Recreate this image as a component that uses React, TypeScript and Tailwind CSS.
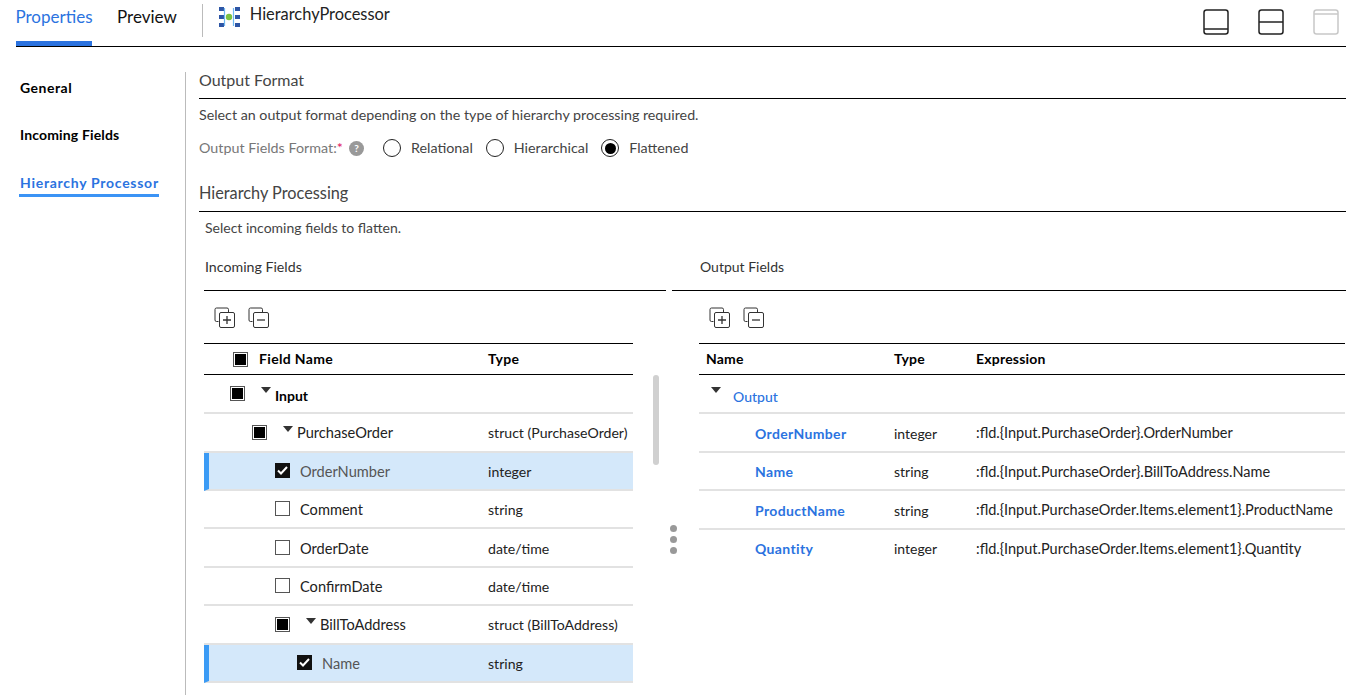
import React from "react";

const F = "font-['Lato','Liberation_Sans',sans-serif]";

function Caret() {
  return (
    <svg width="10" height="6" viewBox="0 0 10 6" className="shrink-0">
      <path d="M0 0H10L5 6Z" fill="#333" />
    </svg>
  );
}

function Check({ state }: { state: "none" | "checked" | "partial" }) {
  if (state === "checked")
    return (
      <span className="flex size-[15px] shrink-0 items-center justify-center bg-[#111]">
        <svg width="11" height="9" viewBox="0 0 11 9">
          <path d="M1 4.5L4 7.5L10 1" fill="none" stroke="#fff" strokeWidth="2" />
        </svg>
      </span>
    );
  return (
    <span className="flex size-[15px] shrink-0 items-center justify-center border border-[#555] bg-white">
      {state === "partial" && <span className="size-[11px] bg-black" />}
    </span>
  );
}

function Radio({ on, label }: { on?: boolean; label: string }) {
  return (
    <span className="flex items-center gap-[10px]">
      <span className="flex size-[18px] items-center justify-center rounded-full border border-[#222]">
        {on && <span className="size-[11px] rounded-full bg-black" />}
      </span>
      <span className="text-[#444]">{label}</span>
    </span>
  );
}

function Expand({ minus }: { minus?: boolean }) {
  return (
    <svg width="22" height="21" viewBox="0 0 22 21" fill="none" stroke="#333" strokeWidth="1">
      <path d="M4.5 14.5H2.5A1.5 1.5 0 0 1 1 13V2.5A1.5 1.5 0 0 1 2.5 1H13A1.5 1.5 0 0 1 14.5 2.5V5" />
      <rect x="5.5" y="5.5" width="15" height="15" rx="1.5" />
      <path d={minus ? "M9 13H17" : "M9 13H17M13 9V17"} strokeWidth="1.3" />
    </svg>
  );
}

function Pane({ line }: { line: "bottom" | "mid" | "top" }) {
  const y = line === "bottom" ? 20 : line === "mid" ? 13 : 5;
  return (
    <svg
      width="26"
      height="26"
      viewBox="0 0 26 26"
      fill="none"
      stroke={line === "top" ? "#c8c8c8" : "#222"}
      strokeWidth="1.5"
    >
      <rect x="1" y="1" width="24" height="24" rx="2.5" />
      <path d={`M1 ${y}H25`} />
    </svg>
  );
}

type Row = {
  name: string;
  type: string;
  indent: number;
  check: "none" | "checked" | "partial";
  caret?: boolean;
  bold?: boolean;
  selected?: boolean;
  h: string;
};

const rows: Row[] = [
  { name: "Input", type: "", indent: 26, check: "partial", caret: true, bold: true, h: "h-[39px]" },
  { name: "PurchaseOrder", type: "struct (PurchaseOrder)", indent: 48, check: "partial", caret: true, h: "h-[39px]" },
  { name: "OrderNumber", type: "integer", indent: 71, check: "checked", selected: true, h: "h-[38px]" },
  { name: "Comment", type: "string", indent: 71, check: "none", h: "h-[38px]" },
  { name: "OrderDate", type: "date/time", indent: 71, check: "none", h: "h-[39px]" },
  { name: "ConfirmDate", type: "date/time", indent: 71, check: "none", h: "h-[38px]" },
  { name: "BillToAddress", type: "struct (BillToAddress)", indent: 71, check: "partial", caret: true, h: "h-[39px]" },
  { name: "Name", type: "string", indent: 93, check: "checked", selected: true, h: "h-[38px]" },
];

const outs = [
  ["OrderNumber", "integer", ":fld.{Input.PurchaseOrder}.OrderNumber"],
  ["Name", "string", ":fld.{Input.PurchaseOrder}.BillToAddress.Name"],
  ["ProductName", "string", ":fld.{Input.PurchaseOrder.Items.element1}.ProductName"],
  ["Quantity", "integer", ":fld.{Input.PurchaseOrder.Items.element1}.Quantity"],
];

export default function App() {
  return (
    <div className={`${F} h-[695px] w-[1356px] overflow-hidden bg-white pl-4 pr-[10px] text-[14px] text-[#222]`}>
      <header className="flex h-[47px] items-stretch border-b border-black">
        <div className="flex h-[46px] w-[76px] justify-center border-b-[5px] border-[#2b73e0] pt-[4px] text-[17px] text-[#2b73e0]">
          Properties
        </div>
        <div className="ml-[25px] pt-[4px] text-[17px] text-[#111]">Preview</div>
        <div className="mb-[9px] ml-[25px] mt-[4px] w-px bg-[#bbb]" />
        <div className="ml-[16px] mt-[7px] h-[20px]">
          <svg width="21" height="20" viewBox="0 0 21 20" className="block">
            <g fill="#2d55a5">
              <rect x="0" y="0" width="5" height="4" />
              <rect x="0" y="8" width="5" height="4" />
              <rect x="0" y="16" width="5" height="4" />
              <rect x="16" y="0" width="5" height="4" />
              <rect x="16" y="8" width="5" height="4" />
              <rect x="16" y="16" width="5" height="4" />
            </g>
            <path d="M5.5 1V19M14.5 1V19" stroke="#6db8f2" strokeWidth="1.2" fill="none" />
            <circle cx="10" cy="10" r="3.2" fill="#7cc242" />
          </svg>
        </div>
        <div className="ml-[10px] pt-[2px] text-[16.4px] text-[#222]">HierarchyProcessor</div>
        <div className="ml-auto mr-[7px] mt-[9px] flex h-[26px] gap-[29px]">
          <Pane line="bottom" />
          <Pane line="mid" />
          <Pane line="top" />
        </div>
      </header>

      <div className="mt-[25px] flex h-[623px]">
        <nav className="flex w-[170px] shrink-0 flex-col items-start border-r border-[#bbb] pl-[3px] font-bold text-black">
          <div className="mt-[6px] h-[20px] pl-px leading-[20px] tracking-[0.5px]">General</div>
          <div className="mt-[27px] h-[20px] pl-px leading-[20px] tracking-[0.15px]">Incoming Fields</div>
          <div className="mt-[28px] border-b-[3px] border-[#3b93f5] pb-[1px] pl-px leading-[20px] tracking-[0.72px] text-[#2b73e0]">
            Hierarchy Processor
          </div>
        </nav>

        <main className="flex-1 pl-[13px]">
          <h2 className="h-[27px] border-b border-black text-[16px] leading-[15px] text-[#444]">Output Format</h2>
          <p className="mt-[6px] h-[20px] text-[14.25px] leading-[20px] text-[#444]">
            Select an output format depending on the type of hierarchy processing required.
          </p>
          <div className="mt-[13px] flex h-[20px] items-center text-[14.3px] leading-[20px]">
            <span className="w-[141px] whitespace-nowrap text-[#777]">
              Output Fields Format:<span className="text-[#e0115f]">*</span>
            </span>
            <span className="ml-[9px] flex size-[15px] items-center justify-center rounded-full bg-[#999] text-[10px] font-bold text-white">
              ?
            </span>
            <span className="ml-[19px] flex gap-[13px]">
              <Radio label="Relational" />
              <Radio label="Hierarchical" />
              <Radio on label="Flattened" />
            </span>
          </div>
          <h2 className="mt-[27px] h-[27px] border-b border-black text-[16.3px] leading-[15px] text-[#444]">
            Hierarchy Processing
          </h2>
          <p className="ml-[6px] mt-[6px] h-[20px] leading-[20px] text-[#444]">Select incoming fields to flatten.</p>

          <div className="ml-[5px] mt-[19px] flex">
            <section className="relative w-[462px] shrink-0">
              <div className="h-[34px] border-b border-black pl-px text-[14.2px] leading-[19px] text-[#333]">Incoming Fields</div>
              <div className="flex h-[52px] items-center gap-3 pl-[10px]">
                <Expand />
                <Expand minus />
              </div>
              <div className="w-[429px]">
                <div className="flex h-[32px] items-center border-y border-black pb-[2px] font-bold tracking-[0.35px] text-black">
                  <span className="ml-[29px] mr-[11px] mt-[2px]">
                    <Check state="partial" />
                  </span>
                  <span className="w-[229px]">Field Name</span>
                  <span>Type</span>
                </div>
                {rows.map((r) => (
                  <div
                    key={r.name}
                    className={`flex ${r.h} items-center border-b-2 border-[#e2e2e2] ${
                      r.selected ? "border-l-[5px] border-l-[#3b9bf5] bg-[#d4e8fa]" : ""
                    }`}
                  >
                    <span className={`flex items-center text-[14.6px] ${r.selected ? "w-[279px]" : "w-[284px]"}`}>
                      <span style={{ marginLeft: r.selected ? r.indent - 5 : r.indent }} className="flex items-center">
                        <Check state={r.check} />
                      </span>
                      {r.caret ? (
                        <span className={`ml-[16px] flex items-center gap-[4px] ${r.bold ? "font-bold text-black" : ""}`}>
                          <span className="-mt-[7px]">
                            <Caret />
                          </span>
                          <span className={r.bold ? "mt-[3px] text-[14px]" : ""}>{r.name}</span>
                        </span>
                      ) : (
                        <span className={`ml-[10px] pt-[2px] ${r.selected ? "text-[#555]" : ""}`}>{r.name}</span>
                      )}
                    </span>
                    <span className={`whitespace-nowrap text-[14.1px] ${r.caret ? "" : "pt-[2px]"}`}>{r.type}</span>
                  </div>
                ))}
              </div>
              <div className="absolute left-[449px] top-[118px] h-[90px] w-[6px] rounded-[3px] bg-[#d0d0d0]" />
            </section>

            <section className="relative ml-[6px] flex-1">
              <span className="absolute -left-[2px] top-[268px] flex flex-col gap-[4px]">
                <span className="size-[7px] rounded-full bg-[#999]" />
                <span className="size-[7px] rounded-full bg-[#999]" />
                <span className="size-[7px] rounded-full bg-[#999]" />
              </span>
              <div className="h-[34px] border-b border-black pl-[28px] leading-[19px] text-[#333]">Output Fields</div>
              <div className="flex h-[52px] items-center gap-3 pl-[37px]">
                <Expand />
                <Expand minus />
              </div>
              <div className="ml-[27px] mr-px">
                <div className="flex h-[32px] items-center border-y border-black pb-[2px] font-bold tracking-[0.2px] text-black">
                  <span className="ml-[7px] w-[188px]">Name</span>
                  <span className="w-[82px]">Type</span>
                  <span>Expression</span>
                </div>
                <div className="flex h-[39px] items-center border-b-2 border-[#e2e2e2] pl-[12px]">
                  <span className="-mt-[8px]">
                    <Caret />
                  </span>
                  <span className="ml-[12px] mt-[5px] font-medium text-[#2b73e0]">Output</span>
                </div>
                {outs.map((o, i) => (
                  <div
                    key={o[0]}
                    className={`flex h-[38.5px] items-center ${i < 3 ? "border-b-2 border-[#e2e2e2] pt-[2px]" : ""}`}
                  >
                    <span className="ml-[56px] w-[139px] font-bold tracking-[0.35px] text-[#2b73e0]">{o[0]}</span>
                    <span className="w-[82px]">{o[1]}</span>
                    <span className="whitespace-nowrap text-[14.5px]">{o[2]}</span>
                  </div>
                ))}
              </div>
            </section>
          </div>
        </main>
      </div>
    </div>
  );
}
